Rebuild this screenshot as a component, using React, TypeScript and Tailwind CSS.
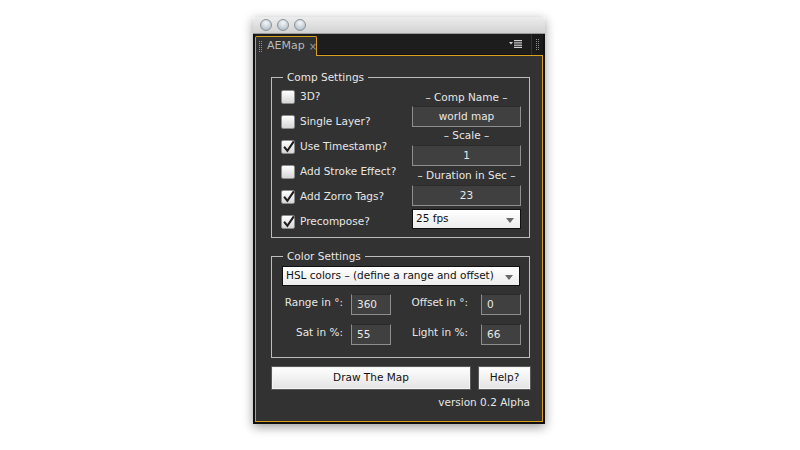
const font = { fontFamily: '"Lucida Grande", "DejaVu Sans", sans-serif' };

function Checkbox({ checked }: { checked: boolean }) {
  return (
    <div className="w-[14px] h-[14px] shrink-0 rounded-[2px] border border-[#8c8c8c] bg-gradient-to-b from-[#ffffff] to-[#d6d6d6] flex items-center justify-center">
      {checked && (
        <svg viewBox="0 0 13 13" className="w-[13px] h-[13px] overflow-visible">
          <path d="M2.8 6.6 L5.4 9.8 L11.2 1.2" fill="none" stroke="#1e1e1e" strokeWidth="2.1" strokeLinecap="square" />
        </svg>
      )}
    </div>
  );
}

function Field({ value, align = "center", className = "" }: { value: string; align?: "center" | "left"; className?: string }) {
  return (
    <div
      className={`h-[21px] bg-[#404040] border border-[#8e8e8e] border-t-[#2a2a2a] flex items-center text-[#e8e8e8] ${
        align === "center" ? "justify-center" : "pl-[5px]"
      } ${className}`}
    >
      {value}
    </div>
  );
}

function Select({ value, className = "" }: { value: string; className?: string }) {
  return (
    <div className={`h-[20px] bg-gradient-to-b from-[#ffffff] to-[#ececec] border border-[#111] flex items-center pl-[3px] pr-[6px] text-[#111] ${className}`}>
      <span className="flex-1 whitespace-nowrap">{value}</span>
      <svg viewBox="0 0 8 5" className="w-[8px] h-[5px] mt-[2px]">
        <path d="M0 0 H8 L4 5 Z" fill="#6a6a6a" />
      </svg>
    </div>
  );
}

function Group({ title, className = "", children }: { title: string; className?: string; children: React.ReactNode }) {
  return (
    <div className={`relative w-[259px] border border-[#bdbdbd] ${className}`}>
      <span className="absolute left-[11px] -top-[7px] px-[4px] bg-[#323232] leading-[13px] text-[#e6e6e6]">{title}</span>
      {children}
    </div>
  );
}

// dotted drag handle on the tabs
function Gripper() {
  return (
    <div className="flex gap-[1px] h-[11px] shrink-0">
      <div className="w-[1px] h-full bg-[repeating-linear-gradient(to_bottom,#8c8c8c_0px,#8c8c8c_1px,transparent_1px,transparent_2px)]" />
      <div className="w-[1px] h-full bg-[repeating-linear-gradient(to_bottom,#8c8c8c_0px,#8c8c8c_1px,transparent_1px,transparent_2px)]" />
    </div>
  );
}

const checks = [
  { label: "3D?", checked: false },
  { label: "Single Layer?", checked: false },
  { label: "Use Timestamp?", checked: true },
  { label: "Add Stroke Effect?", checked: false },
  { label: "Add Zorro Tags?", checked: true },
  { label: "Precompose?", checked: true },
];

export default function App() {
  return (
    <div className="w-[800px] h-[450px] bg-white overflow-hidden text-[10.5px]" style={font}>
      <div className="ml-[253px] mt-[17px] w-[292px] shadow-[0_3px_10px_rgba(0,0,0,0.4)]">
        {/* title bar */}
        <div className="h-[17px] bg-gradient-to-b from-[#ededed] to-[#d2d2d2] border-b border-[#9a9a9a] flex items-center pl-[7px] gap-[5px] rounded-t-[3px]">
          {[0, 1, 2].map((i) => (
            <div
              key={i}
              className="w-[12px] h-[12px] rounded-full border border-[#8a939b] bg-[radial-gradient(circle_at_50%_30%,#f4f7fa_0%,#c9d1d8_55%,#a2adb7_100%)]"
            />
          ))}
        </div>

        <div className="bg-[#101010] px-[2px] pb-[2px]">
          {/* tab bar */}
          <div className="h-[21px] flex items-end bg-[#1d1d1d]">
            <div className="relative z-10 -mb-[1px] w-[62px] h-[20px] bg-[#323232] border border-b-0 border-[#d9a11e] rounded-t-[2px] flex items-center pl-[3px] overflow-hidden">
              <Gripper />
              <span className="ml-[5px] text-[11px] text-[#b8b8b8]">AEMap</span>
              <span className="ml-[4px] text-[10px] text-[#9a9a9a]">×</span>
            </div>
            <div className="flex-1 h-full flex items-center justify-end pr-[9px] border-b border-[#101010]">
              <svg viewBox="0 0 13 8" className="w-[13px] h-[8px]">
                <path d="M0 2 H4 L2 4.5 Z" fill="#d0d0d0" />
                <rect x="5" y="0" width="8" height="1.2" fill="#d0d0d0" />
                <rect x="5" y="2.3" width="8" height="1.2" fill="#d0d0d0" />
                <rect x="5" y="4.6" width="8" height="1.2" fill="#d0d0d0" />
                <rect x="5" y="6.8" width="8" height="1.2" fill="#d0d0d0" />
              </svg>
            </div>
            <div className="w-[12px] h-full bg-[#1a1a1a] border-l border-[#333] flex items-center justify-center">
              <Gripper />
            </div>
          </div>

          {/* panel */}
          <div className="h-[367px] bg-[#323232] border border-[#d9a11e] pl-[15px] pt-[21px] text-[#e6e6e6]">
            <Group title="Comp Settings" className="pt-[11px] pb-[8px] pl-[9px] pr-[8px]">
              <div className="flex justify-between">
                <div className="mt-[1px] flex flex-col gap-[11px]">
                  {checks.map((c) => (
                    <div key={c.label} className="h-[14px] flex items-center gap-[5px]">
                      <Checkbox checked={c.checked} />
                      <span className="whitespace-nowrap">{c.label}</span>
                    </div>
                  ))}
                </div>
                <div className="w-[109px] flex flex-col">
                  <div className="h-[17px] flex items-center justify-center">– Comp Name –</div>
                  <Field value="world map" />
                  <div className="h-[18px] flex items-center justify-center">– Scale –</div>
                  <Field value="1" />
                  <div className="h-[19px] flex items-center justify-center">– Duration in Sec –</div>
                  <Field value="23" />
                  <Select value="25 fps" className="mt-[3px]" />
                </div>
              </div>
            </Group>

            <Group title="Color Settings" className="mt-[18px] pt-[9px] pb-[12px] pl-[10px] pr-[8px]">
              <Select value="HSL colors – (define a range and offset)" className="w-[238px]" />
              <div className="mt-[8px] grid grid-cols-[61px_40px_74px_40px] gap-x-[8px] gap-y-[9px] items-center">
                <span className="text-right pb-[4px] whitespace-nowrap">Range in °:</span>
                <Field value="360" align="left" />
                <span className="text-right pb-[4px] whitespace-nowrap mr-[5px]">Offset in °:</span>
                <Field value="0" align="left" />
                <span className="text-right pb-[4px] whitespace-nowrap">Sat in %:</span>
                <Field value="55" align="left" />
                <span className="text-right pb-[4px] whitespace-nowrap mr-[5px]">Light in %:</span>
                <Field value="66" align="left" />
              </div>
            </Group>

            <div className="mt-[8px] flex gap-[7px]">
              <button className="w-[200px] h-[24px] border border-[#5a5a5a] bg-gradient-to-b from-[#ffffff] to-[#e3e3e3] text-[#111] shadow-[inset_0_0_0_1px_#f4f4f4]">
                Draw The Map
              </button>
              <button className="w-[53px] h-[24px] border border-[#5a5a5a] bg-gradient-to-b from-[#ffffff] to-[#e3e3e3] text-[#111] shadow-[inset_0_0_0_1px_#f4f4f4]">
                Help?
              </button>
            </div>
            <div className="mt-[6px] w-[259px] text-right leading-[13px] text-[#e6e6e6]">version 0.2 Alpha</div>
          </div>
        </div>
      </div>
    </div>
  );
}
